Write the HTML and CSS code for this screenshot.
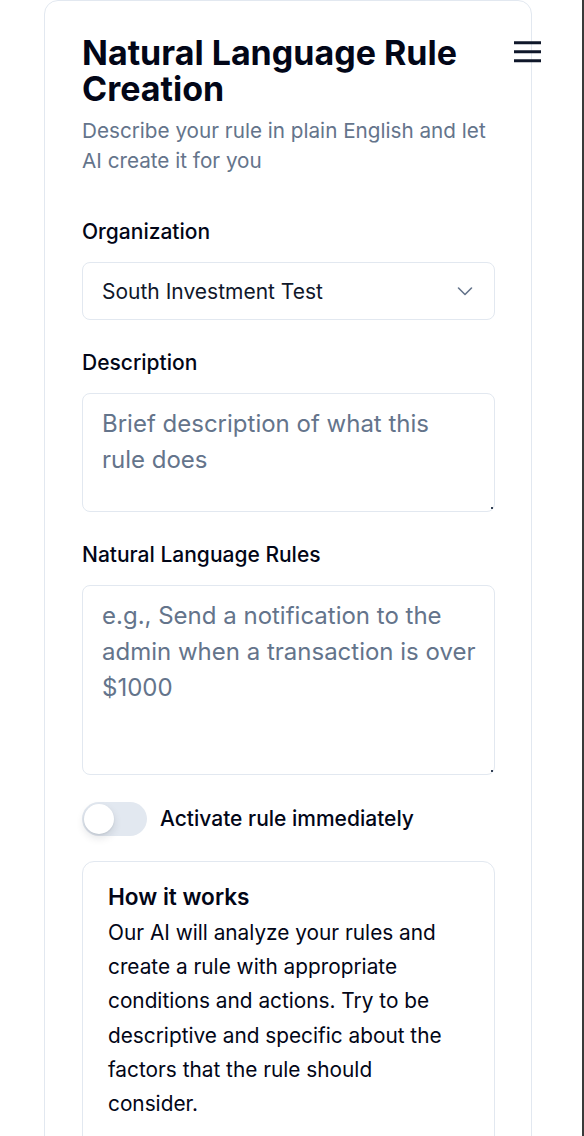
FILE: index.html
```html
<!DOCTYPE html>
<html lang="en">
<head>
<meta charset="utf-8">
<title>Natural Language Rule Creation</title>
<link rel="stylesheet" href="styles.css">
</head>
<body>
<div class="page">
  <main class="card">
    <header class="card-header">
      <h1 class="title">Natural Language Rule Creation</h1>
      <p class="subtitle">Describe your rule in plain English and let AI create it for you</p>
    </header>

    <div class="field">
      <label class="label">Organization</label>
      <div class="select">
        <span class="select-value">South Investment Test</span>
        <svg class="chevron" width="24" height="24" viewBox="0 0 24 24" fill="none" stroke="currentColor" stroke-width="1.6" stroke-linecap="round" stroke-linejoin="round"><path d="M5.5 9l6.5 6.5 6.5-6.5"/></svg>
      </div>
    </div>

    <div class="field">
      <label class="label" for="desc">Description</label>
      <div class="textarea-wrap">
        <textarea id="desc" class="textarea textarea-short" placeholder="Brief description of what this rule does"></textarea>
      </div>
    </div>

    <div class="field field-last">
      <label class="label" for="rules">Natural Language Rules</label>
      <div class="textarea-wrap">
        <textarea id="rules" class="textarea textarea-tall" placeholder="e.g., Send a notification to the admin when a transaction is over $1000"></textarea>
      </div>
    </div>

    <div class="toggle-row">
      <span class="toggle"><span class="knob"></span></span>
      <span class="toggle-label">Activate rule immediately</span>
    </div>

    <section class="info">
      <h2 class="info-title">How it works</h2>
      <p class="info-text">Our AI will analyze your rules and create a rule with appropriate conditions and actions. Try to be descriptive and specific about the factors that the rule should consider.</p>
    </section>
  </main>
</div>
<button class="menu-btn" aria-label="Menu">
  <svg width="30" height="24" viewBox="0 0 30 24" fill="none" stroke="#0f172a" stroke-width="3"><path d="M2 3.7h27M2 12.7h27M2 21.7h27"/></svg>
</button>
<div class="edge"></div>
</body>
</html>
```

FILE: styles.css
```css
* { box-sizing: border-box; }

html, body {
  margin: 0;
  padding: 0;
  background: #ffffff;
}

body {
  font-family: Inter, "Noto Sans", "Liberation Sans", sans-serif;
  color: #0f172a;
  height: 1136px;
  overflow: hidden;
}

.page {
  padding-left: 44px;
}

.card {
  width: 488px;
  border: 1px solid #e2e8f0;
  border-radius: 14px;
  padding: 34px 36px 40px 37px;
  background: #ffffff;
}

.card-header {
  margin-bottom: 43px;
}

.title {
  margin: 0;
  font-size: 34px;
  line-height: 36px;
  font-weight: 700;
  letter-spacing: 0;
  color: #020617;
  padding-right: 30px;
}

.subtitle {
  margin: 9px 0 0 0;
  font-size: 20.7px;
  line-height: 30px;
  color: #64748b;
}

.field {
  display: flex;
  flex-direction: column;
  margin-bottom: 30px;
}

.field-last {
  margin-bottom: 27px;
}

.label {
  font-size: 21px;
  line-height: 26px;
  font-weight: 500;
  color: #020617;
  margin-bottom: 17px;
}

.select {
  display: flex;
  align-items: center;
  justify-content: space-between;
  height: 58px;
  padding: 0 17px 0 19px;
  border: 1px solid #e2e8f0;
  border-radius: 8px;
  font-size: 21px;
  color: #0f172a;
}

.chevron {
  color: #64748b;
}

.textarea-wrap {
  position: relative;
}

.textarea-wrap::after {
  content: "";
  position: absolute;
  right: 2px;
  bottom: 3px;
  width: 2px;
  height: 2px;
  background: #334155;
}

.textarea {
  display: block;
  width: 100%;
  border: 1px solid #e2e8f0;
  border-radius: 8px;
  padding: 12px 12px 12px 19px;
  font-family: inherit;
  font-size: 24px;
  line-height: 36px;
  color: #0f172a;
  resize: none;
  outline: none;
}

.textarea::placeholder {
  color: #64748b;
}

.textarea-short {
  height: 119px;
  padding-right: 19px;
}

.textarea-tall { height: 190px; }

.toggle-row {
  display: flex;
  align-items: center;
  gap: 13px;
  margin-bottom: 25px;
}

.toggle {
  position: relative;
  display: inline-block;
  width: 65px;
  height: 34px;
  border-radius: 17px;
  background: #e2e8f0;
}

.knob {
  position: absolute;
  left: 2px;
  top: 2px;
  width: 30px;
  height: 30px;
  border-radius: 50%;
  background: #ffffff;
  box-shadow: 0 4px 8px rgba(15, 23, 42, 0.12), 0 1px 2px rgba(15, 23, 42, 0.08);
}

.toggle-label {
  font-size: 21px;
  line-height: 26px;
  font-weight: 500;
  color: #020617;
}

.info {
  border: 1px solid #e2e8f0;
  border-radius: 12px;
  padding: 20px 32px 30px 25px;
}

.info-title {
  margin: 0;
  font-size: 22.6px;
  line-height: 30px;
  font-weight: 600;
  color: #020617;
}

.info-text {
  margin: 4px 0 0 0;
  font-size: 20.8px;
  line-height: 34.2px;
  color: #020617;
}

.menu-btn {
  position: fixed;
  top: 39px;
  left: 512px;
  padding: 0;
  margin: 0;
  border: 0;
  background: transparent;
  width: 30px;
  height: 24px;
  cursor: pointer;
}

.menu-btn svg { display: block; }

.edge {
  position: fixed;
  top: 0;
  right: 0;
  width: 2px;
  height: 100%;
  background: #3a3a3a;
}
```
